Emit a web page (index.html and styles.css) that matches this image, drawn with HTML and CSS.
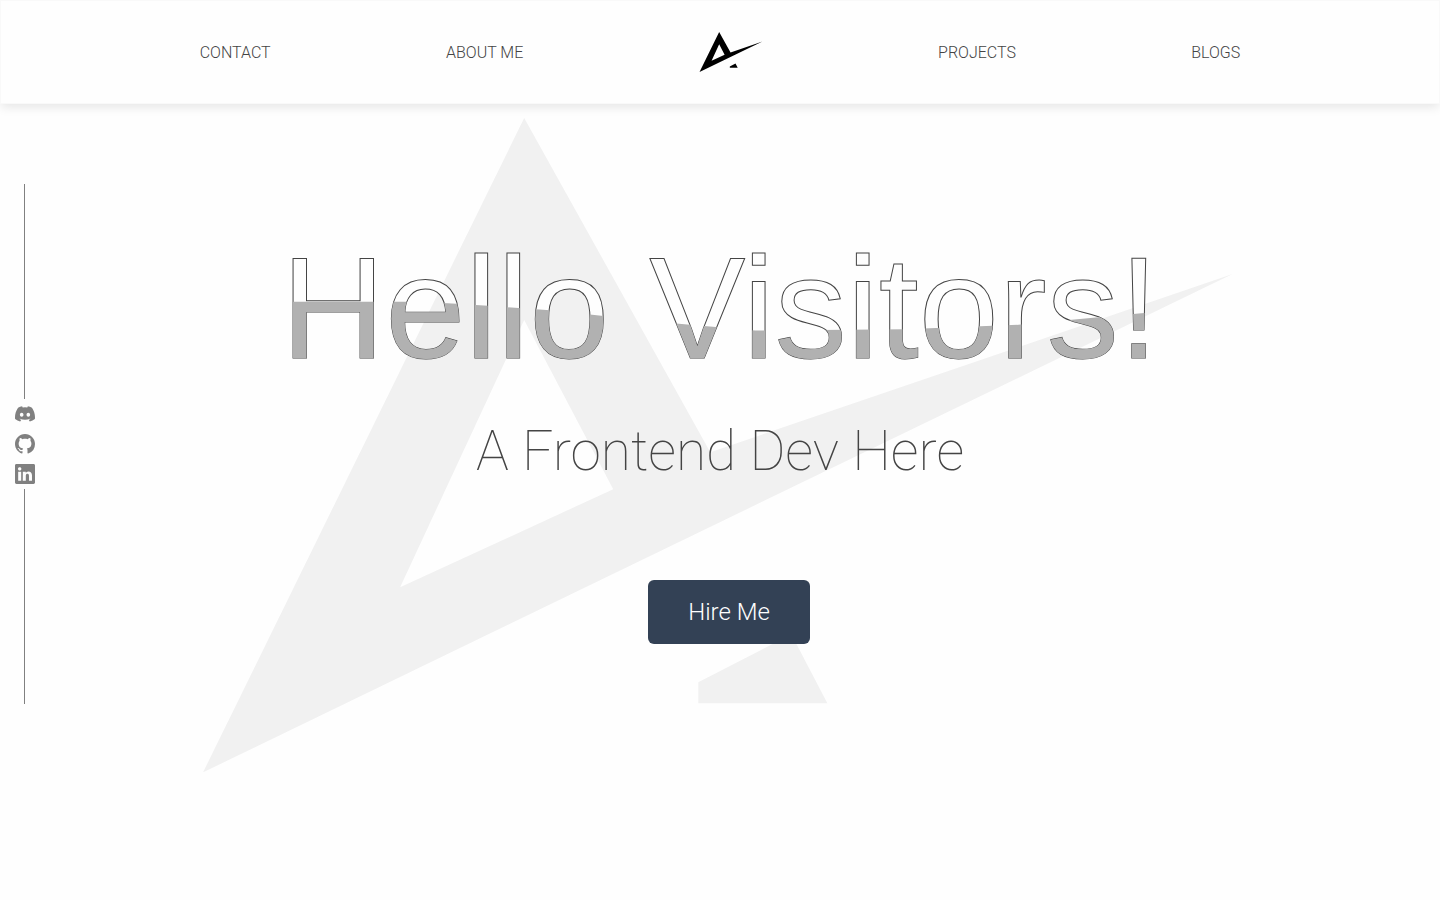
FILE: index.html
```html
<!DOCTYPE html>
<html lang="en">
<head>
<meta charset="utf-8">
<meta name="viewport" content="width=device-width, initial-scale=1">
<title>A Frontend Dev</title>
<link rel="stylesheet" href="styles.css">
</head>
<body>
<svg class="defs" aria-hidden="true">
  <symbol id="mark" viewBox="203 118 1029 654">
    <path fill-rule="evenodd" d="M524 118 710 452 1232 274 203 772ZM524 320 400 587 613 489Z"/>
    <path d="M698 682 791 634 827 703H698Z"/>
  </symbol>
</svg>

<header class="header">
  <nav class="nav">
    <a class="nav-link" href="#contact">CONTACT</a>
    <a class="nav-link" href="#about">ABOUT ME</a>
    <a class="nav-logo" href="#home" aria-label="Home"><svg class="logo"><use href="#mark"/></svg></a>
    <a class="nav-link" href="#projects">PROJECTS</a>
    <a class="nav-link" href="#blogs">BLOGS</a>
  </nav>
</header>

<aside class="social">
  <span class="social-line"></span>
  <a class="social-link" href="#discord" aria-label="Discord"><svg class="social-icon" viewBox="0 0 16 16"><path d="M13.545 2.907a13.227 13.227 0 0 0-3.257-1.011.05.05 0 0 0-.052.025c-.141.25-.297.577-.406.833a12.19 12.19 0 0 0-3.658 0 8.258 8.258 0 0 0-.412-.833.051.051 0 0 0-.052-.025c-1.125.194-2.22.534-3.257 1.011a.041.041 0 0 0-.021.018C.356 6.024-.213 9.047.066 12.032c.001.014.01.028.021.037a13.276 13.276 0 0 0 3.995 2.02.05.05 0 0 0 .056-.019c.308-.42.582-.863.818-1.329a.05.05 0 0 0-.028-.07 8.875 8.875 0 0 1-1.248-.595.05.05 0 0 1-.005-.085c.084-.063.168-.129.248-.195a.05.05 0 0 1 .051-.007c2.619 1.196 5.454 1.196 8.041 0a.052.052 0 0 1 .053.007c.08.066.164.132.248.195a.051.051 0 0 1-.004.085 8.254 8.254 0 0 1-1.249.594.05.05 0 0 0-.027.071c.24.465.515.909.817 1.329a.05.05 0 0 0 .056.019 13.235 13.235 0 0 0 4.001-2.02.049.049 0 0 0 .021-.037c.334-3.451-.559-6.449-2.366-9.106a.034.034 0 0 0-.02-.019ZM5.347 10.214c-.789 0-1.438-.724-1.438-1.612 0-.889.637-1.613 1.438-1.613.807 0 1.45.73 1.438 1.613 0 .888-.637 1.612-1.438 1.612Zm5.316 0c-.788 0-1.438-.724-1.438-1.612 0-.889.637-1.613 1.438-1.613.807 0 1.451.73 1.438 1.613 0 .888-.631 1.612-1.438 1.612Z"/></svg></a>
  <a class="social-link" href="#github" aria-label="GitHub"><svg class="social-icon" viewBox="0 0 16 16"><path d="M8 0C3.58 0 0 3.58 0 8c0 3.54 2.29 6.53 5.47 7.59.4.07.55-.17.55-.38 0-.19-.01-.82-.01-1.49-2.01.37-2.53-.49-2.69-.94-.09-.23-.48-.94-.82-1.13-.28-.15-.68-.52-.01-.53.63-.01 1.08.58 1.23.82.72 1.21 1.87.87 2.33.66.07-.52.28-.87.51-1.07-1.78-.2-3.64-.89-3.64-3.95 0-.87.31-1.59.82-2.15-.08-.2-.36-1.02.08-2.12 0 0 .67-.21 2.2.82.64-.18 1.32-.27 2-.27s1.36.09 2 .27c1.53-1.04 2.2-.82 2.2-.82.44 1.1.16 1.92.08 2.12.51.56.82 1.27.82 2.15 0 3.07-1.87 3.75-3.65 3.95.29.25.54.73.54 1.48 0 1.07-.01 1.93-.01 2.2 0 .21.15.46.55.38A8.01 8.01 0 0 0 16 8c0-4.42-3.58-8-8-8Z"/></svg></a>
  <a class="social-link" href="#linkedin" aria-label="LinkedIn"><svg class="social-icon" viewBox="0 0 16 16"><path d="M0 1.146C0 .513.526 0 1.175 0h13.65C15.474 0 16 .513 16 1.146v13.708c0 .633-.526 1.146-1.175 1.146H1.175C.526 16 0 15.487 0 14.854V1.146Zm4.943 12.248V6.169H2.542v7.225h2.401Zm-1.2-8.212c.837 0 1.358-.554 1.358-1.248-.015-.709-.52-1.248-1.342-1.248-.822 0-1.359.54-1.359 1.248 0 .694.521 1.248 1.327 1.248h.016Zm4.908 8.212V9.359c0-.216.016-.432.08-.586.173-.431.568-.878 1.232-.878.869 0 1.216.662 1.216 1.634v3.865h2.401V9.25c0-2.22-1.184-3.252-2.764-3.252-1.274 0-1.845.7-2.165 1.193V6.169h-2.4c.03.678 0 7.225 0 7.225h2.4Z"/></svg></a>
  <span class="social-line"></span>
</aside>

<main class="hero" id="home">
  <svg class="watermark" viewBox="203 118 1029 654" aria-hidden="true"><use href="#mark" x="203" y="118" width="1029" height="654"/></svg>
  <h1 class="title" data-text="Hello Visitors!">Hello Visitors!</h1>
  <p class="subtitle">A Frontend Dev Here</p>
  <div class="actions">
    <button class="hire" type="button">Hire Me</button>
  </div>
</main>
</body>
</html>
```

FILE: styles.css
```css
* {
  box-sizing: border-box;
}

body {
  margin: 0;
  min-height: 100vh;
  background: #fefefe;
  color: #444;
  font-family: Roboto, "Liberation Sans", sans-serif;
  font-weight: 300;
}

.defs {
  position: absolute;
  width: 0;
  height: 0;
}

.header {
  position: relative;
  z-index: 2;
  padding: 31px 13.8%;
  border: 1px solid #f9f9f9;
  background: #fefefe;
  box-shadow: 0 4px 10px -1px rgba(0, 0, 0, 0.1);
}

.nav {
  display: flex;
  align-items: center;
  justify-content: space-between;
}

.nav-link {
  padding-top: 2px;
  color: #444;
  font-size: 16px;
  line-height: 24px;
  text-decoration: none;
}

.nav-logo {
  display: block;
  color: #000;
}

.logo {
  display: block;
  width: 64px;
  height: 40px;
  fill: currentColor;
}

.social {
  position: fixed;
  top: 184px;
  left: 15px;
  z-index: 1;
  display: flex;
  flex-direction: column;
  align-items: center;
  gap: 10px;
  width: 20px;
  height: 520px;
}

.social-line {
  flex: 1;
  width: 1px;
  margin-right: 1px;
  background: #808080;
}

.social-line:first-child {
  margin-bottom: -5px;
}

.social-line:last-child {
  margin-top: -5px;
}

.social-link {
  display: block;
  color: #808080;
}

.social-icon {
  display: block;
  width: 20px;
  height: 20px;
  fill: currentColor;
}

.hero {
  position: relative;
  display: flex;
  flex-direction: column;
  align-items: center;
  padding: 133px 16px 64px;
}

.watermark {
  position: absolute;
  top: 14px;
  left: 14.1%;
  z-index: -1;
  width: 71.5%;
  fill: #f1f1f1;
}

.title {
  position: relative;
  margin: 0;
  color: #fefefe;
  font-family: "Liberation Sans", Arial, sans-serif;
  font-size: 144px;
  font-weight: 400;
  line-height: 144px;
  -webkit-text-stroke: 1px #444;
}

.title::after {
  content: attr(data-text);
  position: absolute;
  inset: 0;
  color: #b1b1b1;
  -webkit-text-stroke: 0;
  clip-path: polygon(0 45%, 14% 45%, 19% 46%, 24% 48%, 31% 51%, 37% 55%, 45% 60%, 54% 65%, 71% 64%, 84% 61%, 98% 53%, 100% 52%, 100% 100%, 0 100%);
}

.subtitle {
  margin: 38px 0 0;
  font-size: 55px;
  font-weight: 100;
  line-height: 64px;
}

.actions {
  margin-top: 97px;
  padding-left: 18px;
}

.hire {
  padding: 16px 40px;
  border: 0;
  border-radius: 6px;
  background: #334155;
  color: #fefefe;
  font: 300 24px/32px Roboto, "Liberation Sans", sans-serif;
  cursor: pointer;
}
```
